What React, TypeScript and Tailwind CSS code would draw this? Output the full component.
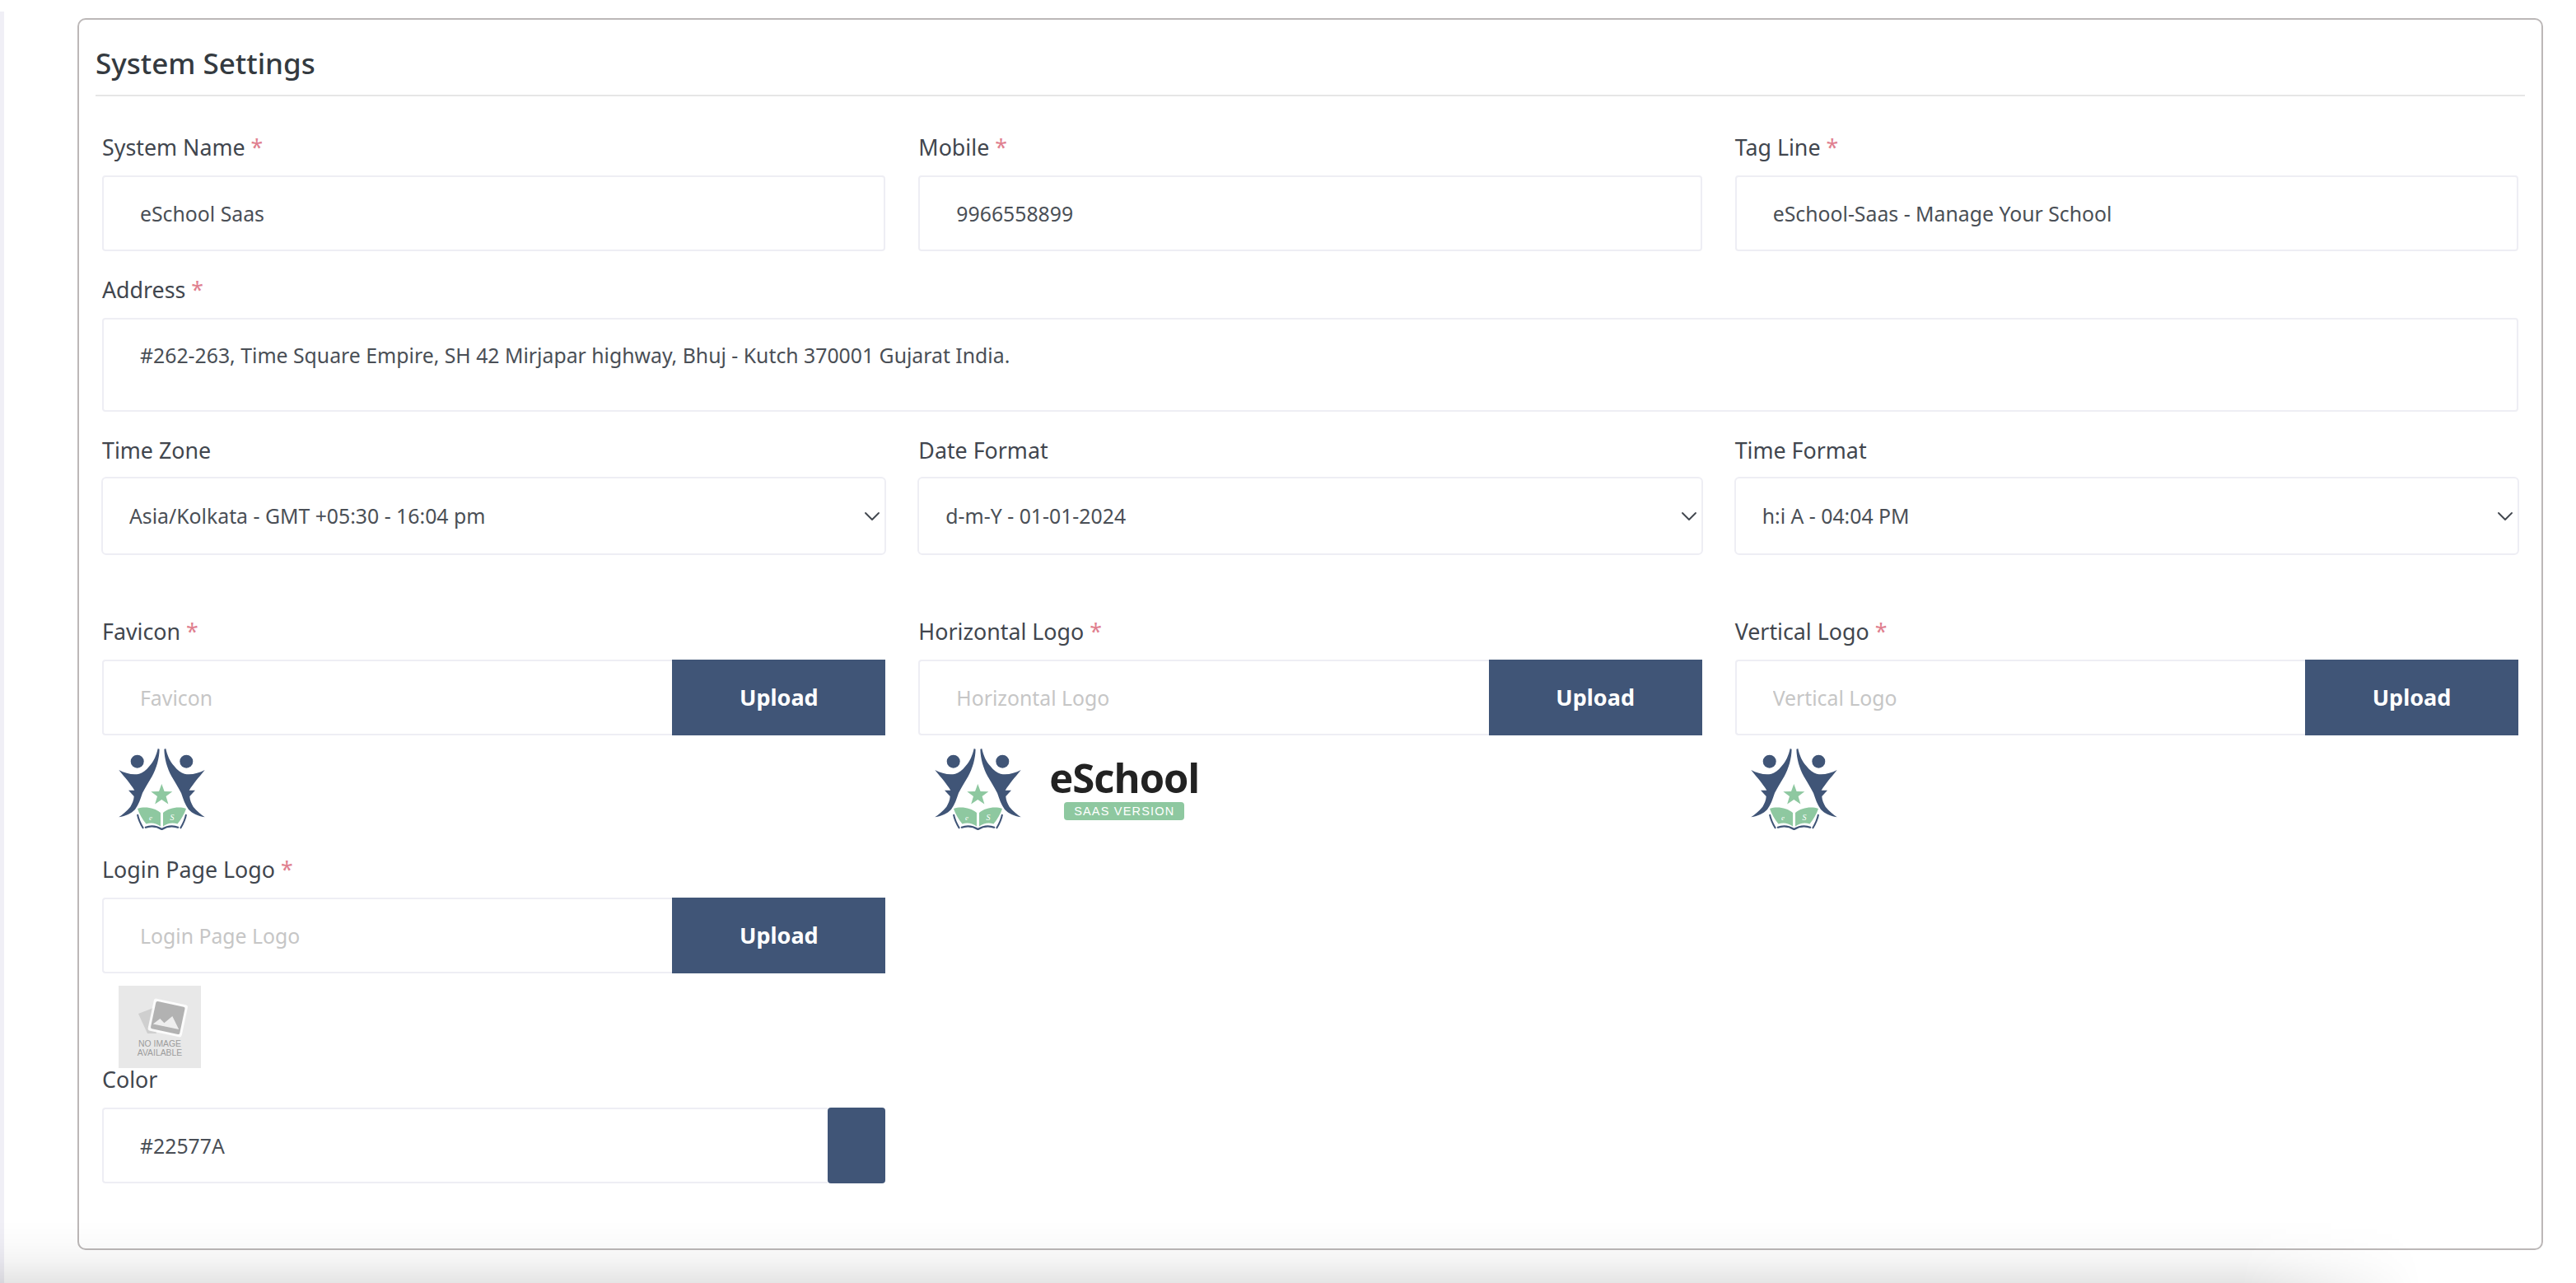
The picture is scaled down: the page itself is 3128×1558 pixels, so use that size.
import { ChevronDown } from 'lucide-react'

const labelCls = "block h-[34px] mb-[17px] text-[26.8px] leading-[34px] text-[#41464e]"
const inputCls = "block w-full h-[92px] border-2 border-[#eeeef4] rounded-[4px] pl-[44px] pr-4 text-[24.8px] text-[#4a4f56] bg-white outline-none placeholder:text-[#c6c6c6]"

function Label({ text, required }: { text: string; required?: boolean }) {
  return (
    <label className={labelCls}>
      {text}
      {required && <span className="text-[#e0808f]"> *</span>}
    </label>
  )
}

function TextField({ label, value }: { label: string; value: string }) {
  return (
    <div>
      <Label text={label} required />
      <input readOnly value={value} className={inputCls} />
    </div>
  )
}

function SelectField({ label, value }: { label: string; value: string }) {
  return (
    <div className="-mx-[1px]">
      <label className="block h-[34px] mb-[15px] ml-[1px] text-[26.8px] leading-[34px] text-[#41464e]">{label}</label>
      <div className="relative">
        <select
          defaultValue={value}
          className="block w-full h-[95px] appearance-none border-2 border-[#eeeef4] rounded-[6px] pl-[32px] pr-10 text-[24.8px] text-[#4a4f56] bg-white outline-none"
        >
          <option>{value}</option>
        </select>
        <ChevronDown strokeWidth={1.4} className="absolute right-[1px] top-[32px] w-[32px] h-[32px] text-[#41464e] pointer-events-none" />
      </div>
    </div>
  )
}

function UploadInput({ label }: { label: string }) {
  return (
    <div className="flex">
      <input readOnly placeholder={label} className="block flex-1 min-w-0 h-[92px] border-2 border-r-0 border-[#eeeef4] rounded-l-[4px] pl-[44px] pr-4 text-[24.8px] bg-white outline-none placeholder:text-[#c6c6c6]" />
      <button className="w-[259px] h-[92px] bg-[#405577] text-white text-[27px] font-bold">Upload</button>
    </div>
  )
}

function SchoolMark() {
  const figure = (
    <>
      <circle cx="22.7" cy="16.7" r="8" />
      <path d="M47.7 1 C46 9 42.5 17 37.7 22 C33.5 27.5 29 30.5 25 31.8 C17 33.5 8 31 0.3 27 C4 32 8 36 11 40 C14 44 17 48 19.3 51.7 L12 51.7 L18.7 59 C18.5 64 16.5 68 14.3 71.7 C10 77 5 81 0.3 84.3 C9 83 15 80 20 75 C24.5 69 26.5 62 29 55 C32.5 48 36.5 42 40.5 35 C46 25 49.5 13 49.6 1.7 Z" />
    </>
  )
  return (
    <svg viewBox="0 0 105 100" className="w-[105px] h-[100px] shrink-0">
      <g fill="#405577">
        {figure}
        <g transform="translate(105 0) scale(-1 1)">{figure}</g>
      </g>
      <polygon
        fill="#8ec8a0"
        points="52.3,44 55.6,53 65.3,53.2 57.6,59 60.4,68.5 52.3,63 44.2,68.5 47,59 39.3,53.2 49,53"
      />
      <path d="M23 74 C32 71 44 73 51 79 L51 95.5 C45 91 39 90.5 33.5 92.5 C29 87 25 80 23 74 Z" fill="#8ec8a0" />
      <path d="M82 74 C73 71 61 73 54 79 L54 95.5 C60 91 66 90.5 71.5 92.5 C76 87 80 80 82 74 Z" fill="#8ec8a0" />
      <text x="39" y="88" fontSize="9" fill="#fff" fontStyle="italic" textAnchor="middle" fontFamily="Liberation Serif, serif">e</text>
      <text x="65" y="88" fontSize="10" fill="#fff" fontStyle="italic" textAnchor="middle" fontFamily="Liberation Serif, serif">S</text>
      <path d="M23 81 C24 87 27 93 30 98 M82 81 C81 87 78 93 75 98" stroke="#405577" strokeWidth="2" fill="none" />
      <path d="M32 97 C40 94 46 95 52.5 99 C59 95 65 94 73 97" stroke="#405577" strokeWidth="2.4" fill="none" />
    </svg>
  )
}

function NoImage() {
  return (
    <div className="w-[100px] h-[100px] bg-[#e8e8e8] ml-[20px]">
      <svg viewBox="0 0 100 100" className="w-full h-full">
        <polygon points="24,34 42,27 46,58 35,58" fill="#cfcfcf" />
        <g transform="rotate(12 60 38)">
          <rect x="39" y="19" width="42" height="40" rx="3" fill="#fff" opacity="0.85" />
          <rect x="42" y="22" width="36" height="34" rx="2" fill="#b2b2b2" />
          <path d="M44 50 L51 42 L57 46 L65 36 L76 50 Z" fill="#eeeeee" />
        </g>
        <text x="50" y="74" textAnchor="middle" fontSize="10.4" fill="#9c9c9c" fontFamily="Liberation Sans, sans-serif">NO IMAGE</text>
        <text x="50" y="85" textAnchor="middle" fontSize="10.4" fill="#9c9c9c" fontFamily="Liberation Sans, sans-serif">AVAILABLE</text>
      </svg>
    </div>
  )
}

export default function App() {
  return (
    <div className="relative flex h-[1558px] overflow-hidden bg-white font-['Noto_Sans',sans-serif]">
      <aside className="w-[5px] mt-[14px] bg-[#f0eff6] shrink-0" />

      <main className="flex-1 ml-[89px] mr-[40px] mt-[22px]">
        <div className="h-[1496px] border-2 border-[#bcb8b8] rounded-[10px] bg-white px-[20px]">
          <h1 className="pt-[30px] h-[93px] border-b-2 border-[#e6e6e6] text-[35px] leading-[46px] font-medium text-[#343a40]">
            System Settings
          </h1>

          <form className="px-[8px] pt-[45px]">
            <div className="grid grid-cols-3 gap-x-[40px]">
              <TextField label="System Name" value="eSchool Saas" />
              <TextField label="Mobile" value="9966558899" />
              <TextField label="Tag Line" value="eSchool-Saas - Manage Your School" />
            </div>

            <div className="mt-[30px]">
              <Label text="Address" required />
              <textarea
                readOnly
                value="#262-263, Time Square Empire, SH 42 Mirjapar highway, Bhuj - Kutch 370001 Gujarat India."
                className="block w-full h-[114px] resize-none border-2 border-[#eeeef4] rounded-[4px] pl-[44px] pt-[26px] text-[24.8px] leading-[34px] text-[#4a4f56] outline-none"
              />
            </div>

            <div className="grid grid-cols-3 gap-x-[40px] mt-[30px]">
              <SelectField label="Time Zone" value="Asia/Kolkata - GMT +05:30 - 16:04 pm" />
              <SelectField label="Date Format" value="d-m-Y - 01-01-2024" />
              <SelectField label="Time Format" value="h:i A - 04:04 PM" />
            </div>

            <div className="grid grid-cols-3 gap-x-[40px] mt-[76px]">
              <div>
                <Label text="Favicon" required />
                <UploadInput label="Favicon" />
                <div className="mt-[15px] ml-[20px]"><SchoolMark /></div>
              </div>
              <div>
                <Label text="Horizontal Logo" required />
                <UploadInput label="Horizontal Logo" />
                <div className="flex mt-[15px] ml-[20px]">
                  <SchoolMark />
                  <div className="ml-[33px] w-[184px] flex flex-col items-center">
                    <span className="mt-[7px] h-[58px] font-['Open_Sans',sans-serif] text-[49px] leading-[58px] font-bold tracking-[-1px] text-[#222222]">eSchool</span>
                    <span className="mt-[1px] w-[146px] h-[22px] rounded-[4px] bg-[#8ec8a0] text-center font-['Liberation_Sans',sans-serif] text-[14.5px] leading-[22px] tracking-[1.2px] text-white">SAAS VERSION</span>
                  </div>
                </div>
              </div>
              <div>
                <Label text="Vertical Logo" required />
                <UploadInput label="Vertical Logo" />
                <div className="mt-[15px] ml-[19px]"><SchoolMark /></div>
              </div>
            </div>

            <div className="grid grid-cols-3 gap-x-[40px] mt-[31px]">
              <div>
                <Label text="Login Page Logo" required />
                <UploadInput label="Login Page Logo" />
                <div className="mt-[15px]"><NoImage /></div>
              </div>
            </div>

            <div className="grid grid-cols-3 gap-x-[40px] -mt-[3px]">
              <div>
                <Label text="Color" />
                <div className="flex">
                  <input readOnly value="#22577A" className="block flex-1 min-w-0 h-[92px] border-2 border-r-0 border-[#eeeef4] rounded-l-[4px] pl-[44px] text-[24.8px] text-[#4a4f56] outline-none" />
                  <div className="w-[70px] h-[92px] rounded-[4px] bg-[#405577]" />
                </div>
              </div>
            </div>
          </form>
        </div>
      </main>

      <div className="absolute left-0 bottom-0 w-full h-[90px] pointer-events-none bg-[linear-gradient(to_top,rgba(0,0,0,0.1),rgba(0,0,0,0.045)_30%,rgba(0,0,0,0.015)_55%,rgba(0,0,0,0)_85%)] [mask-image:linear-gradient(to_right,black_87%,transparent_94%)]" />
    </div>
  )
}
